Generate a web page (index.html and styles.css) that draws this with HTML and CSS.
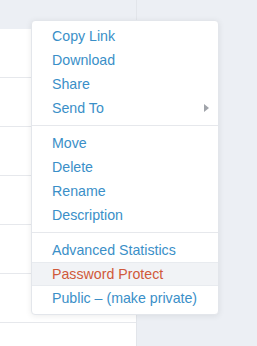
FILE: index.html
```html
<!DOCTYPE html>
<html lang="en">
<head>
  <meta charset="UTF-8">
  <meta name="viewport" content="width=device-width, initial-scale=1.0">
  <title>File Menu</title>
  <link rel="stylesheet" href="styles.css">
</head>
<body>

  <div class="page">
    <div class="file-list">
      <div class="list-top"></div>
      <div class="row"></div>
      <div class="row"></div>
      <div class="row"></div>
      <div class="row"></div>
      <div class="row"></div>
      <div class="row"></div>
      <div class="row"></div>
    </div>
    <div class="side"></div>
  </div>

  <ul class="menu">
    <li class="item">Copy Link</li>
    <li class="item">Download</li>
    <li class="item">Share</li>
    <li class="item has-sub">Send To</li>
    <li class="divider"></li>
    <li class="item">Move</li>
    <li class="item">Delete</li>
    <li class="item">Rename</li>
    <li class="item">Description</li>
    <li class="divider"></li>
    <li class="item">Advanced Statistics</li>
    <li class="item active">Password Protect</li>
    <li class="item">Public &ndash; (make private)</li>
  </ul>

</body>
</html>
```

FILE: styles.css
```css
body {
  font-family: "Liberation Sans", Arial, sans-serif;
  margin: 0;
  background-color: #eceff4;
  overflow: hidden;
}
.page {
  display: flex;
  height: 346px;
  overflow: hidden;
}
.file-list {
  width: 136px;
  border-right: 1px solid #e2e5ea;
  flex-shrink: 0;
}
.list-top {
  height: 29px;
}
.row {
  height: 48px;
  background: white;
  border-bottom: 1px solid #e6e8ec;
}
.side {
  flex: 1;
}
.menu {
  position: absolute;
  top: 20px;
  left: 31px;
  width: 186px;
  margin: 0;
  padding: 3px 0 4px;
  list-style: none;
  background: #fff;
  border: 1px solid #e3e6eb;
  border-radius: 4px;
  box-shadow: 0 1px 6px rgba(0, 0, 0, 0.08);
}
.item {
  position: relative;
  height: 24px;
  line-height: 24px;
  padding-left: 20px;
  font-size: 14.2px;
  color: #3a8fc8;
}
.item.active {
  height: 22px;
  line-height: 22px;
  color: #d0593a;
  background: #f1f3f6;
  border-top: 1px solid #e8ebef;
  border-bottom: 1px solid #e8ebef;
}
.has-sub::after {
  content: "";
  position: absolute;
  right: 9px;
  top: 8px;
  border-left: 5px solid #a0a4aa;
  border-top: 4px solid transparent;
  border-bottom: 4px solid transparent;
}
.divider {
  height: 1px;
  margin: 5px 0;
  background: #e6e8ec;
}
```
